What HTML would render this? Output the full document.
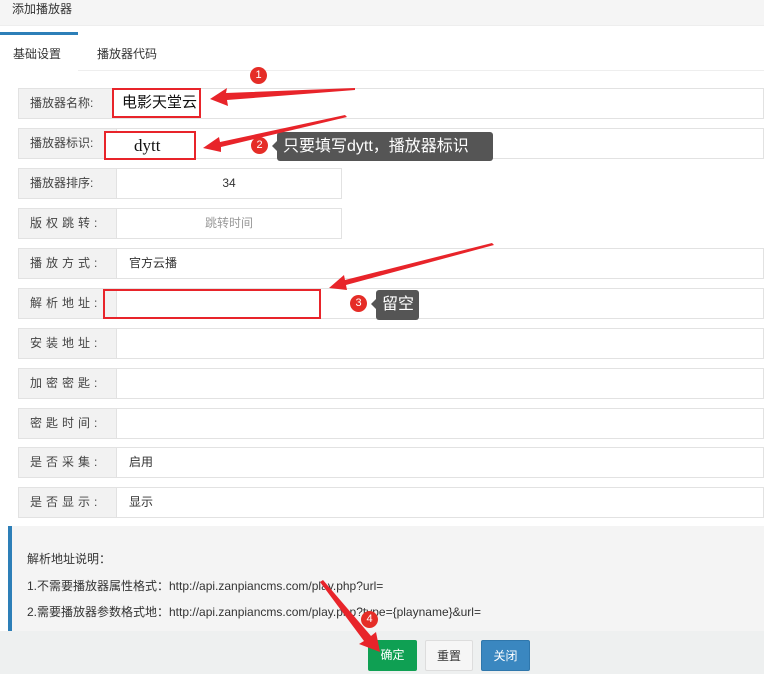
<!DOCTYPE html><html><head><meta charset="utf-8"><style>
*{margin:0;padding:0;box-sizing:border-box}
body{width:764px;height:674px;overflow:hidden;background:#fff;font-family:"Liberation Sans","Noto Sans CJK SC",sans-serif;font-size:12px;color:#333;position:relative}
.a{position:absolute}
.lab{position:absolute;left:18px;width:99px;height:31px;background:#f2f2f2;border:1px solid #e2e2e2;line-height:29px;padding-left:11px;color:#444;white-space:nowrap}
.inp{position:absolute;left:116px;height:31px;border:1px solid #e2e2e2;line-height:29px;background:#fff}
.red{position:absolute;border:2px solid #e8242a;white-space:nowrap;overflow:hidden}
.badge{position:absolute;width:17px;height:17px;border-radius:50%;background:#e52d27;color:#fff;font-size:11px;text-align:center;line-height:17px}
.tip{position:absolute;background:#555;color:#fff;font-size:16px;border-radius:3px;padding-left:6px;white-space:nowrap}
.btn{position:absolute;top:640px;height:31px;border-radius:2px;line-height:31px;text-align:center;font-size:12px}
</style></head><body>
<div class="a" style="left:0;top:0;width:764px;height:26px;background:#f5f5f5;border-bottom:1px solid #eee;line-height:18px;padding-left:12px;color:#333">添加播放器</div>
<div class="a" style="left:0;top:32px;width:78px;height:40px;border-top:3px solid #2d7fb8;background:#fff;line-height:38px;padding-left:13px">基础设置</div>
<div class="a" style="left:97px;top:35px;line-height:38px;color:#333">播放器代码</div>
<div class="a" style="left:78px;top:70px;width:686px;height:1px;background:#eee"></div>

<div class="lab" style="top:88px">播放器名称:</div><div class="inp" style="top:88px;right:0"></div>
<div class="lab" style="top:128px">播放器标识:</div><div class="inp" style="top:128px;right:0"></div>
<div class="lab" style="top:168px">播放器排序:</div><div class="inp" style="top:168px;width:226px;text-align:center">34</div>
<div class="lab" style="top:208px;letter-spacing:4px">版权跳转:</div><div class="inp" style="top:208px;width:226px;text-align:center;color:#999">跳转时间</div>
<div class="lab" style="top:248px;letter-spacing:4px">播放方式:</div><div class="inp" style="top:248px;right:0;padding-left:12px">官方云播</div>
<div class="lab" style="top:288px;letter-spacing:4px">解析地址:</div><div class="inp" style="top:288px;right:0"></div>
<div class="lab" style="top:328px;letter-spacing:4px">安装地址:</div><div class="inp" style="top:328px;right:0"></div>
<div class="lab" style="top:368px;letter-spacing:4px">加密密匙:</div><div class="inp" style="top:368px;right:0"></div>
<div class="lab" style="top:408px;letter-spacing:4px">密匙时间:</div><div class="inp" style="top:408px;right:0"></div>
<div class="lab" style="top:447px;letter-spacing:4px">是否采集:</div><div class="inp" style="top:447px;right:0;padding-left:12px">启用</div>
<div class="lab" style="top:487px;letter-spacing:4px">是否显示:</div><div class="inp" style="top:487px;right:0;padding-left:12px">显示</div>

<div class="a" style="left:8px;top:526px;width:756px;height:105px;background:#f4f4f4;border-left:4px solid #2d7fb8;color:#333">
<div style="position:absolute;top:24px;left:15px">解析地址说明：</div>
<div style="position:absolute;top:51px;left:15px;white-space:nowrap">1.不需要播放器属性格式：http://api.zanpiancms.com/play.php?url=</div>
<div style="position:absolute;top:77px;left:15px;white-space:nowrap">2.需要播放器参数格式地：http://api.zanpiancms.com/play.php?type={playname}&amp;url=</div>
</div>
<div class="a" style="left:0;top:631px;width:764px;height:43px;background:#eef0f0"></div>
<div class="btn" style="left:368px;width:49px;background:#0fa053;color:#fff">确定</div>
<div class="btn" style="left:425px;width:48px;background:#f6f6f6;border:1px solid #ddd">重置</div>
<div class="btn" style="left:481px;width:49px;background:#3a87c0;color:#fff;border:1px solid #2f77ac">关闭</div>

<div class="red" style="left:112px;top:88px;width:89px;height:30px;background:#fff;font-size:15px;line-height:26px;padding-left:8px;color:#111">电影天堂云</div>
<div class="red" style="left:104px;top:131px;width:92px;height:29px;background:#fff;font-size:17px;line-height:25px;padding-left:28px;font-family:'Liberation Serif',serif;color:#111">dytt</div>
<div class="red" style="left:103px;top:289px;width:218px;height:30px"></div>
<div class="tip" style="left:277px;top:132px;width:216px;height:29px;line-height:29px">只要填写dytt，播放器标识</div>
<div class="a" style="left:272px;top:141px;width:0;height:0;border:5px solid transparent;border-right-color:#555;border-left:0"></div>
<div class="tip" style="left:376px;top:290px;width:43px;height:30px;line-height:30px">留空</div>
<div class="a" style="left:371px;top:299px;width:0;height:0;border:5px solid transparent;border-right-color:#555;border-left:0"></div>
<div class="badge" style="left:250px;top:67px">1</div>
<div class="badge" style="left:251px;top:137px">2</div>
<div class="badge" style="left:350px;top:295px">3</div>
<div class="badge" style="left:361px;top:611px">4</div>
<svg class="a" style="left:0;top:0" width="764" height="674">
<g fill="#e8242a">
<polygon points="355,88 226,93 227,88 210,99 228,106 227,100 355,90"/>
<polygon points="345,115 220,142 219,137 203,148 221,152 221,147 347,117"/>
<polygon points="492,243 345,280 344,275 329,288 347,290 346,285 494,245"/>
<polygon points="320,582 364,641 359,644 380,652 376,632 371,636 323,580"/>
</g></svg>
</body></html>
